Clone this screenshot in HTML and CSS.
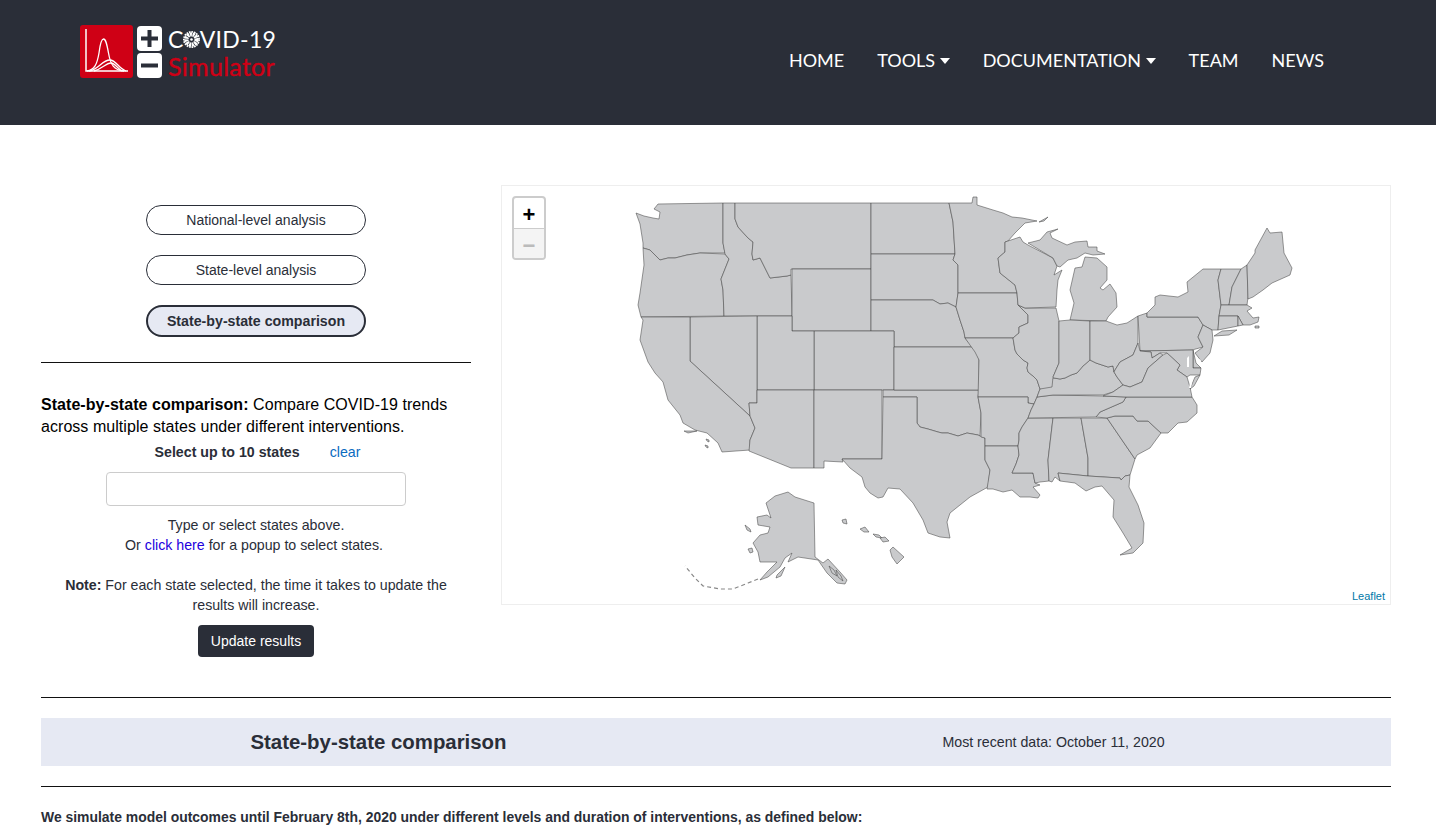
FILE: index.html
```html
<!DOCTYPE html>
<html lang="en">
<head>
  <meta charset="UTF-8" />
  <title>COVID-19 Simulator</title>
  <link rel="stylesheet" href="styles.css">
</head>
<body>

  <header class="topbar">
    <a class="logo" href="#">
      <svg class="logo-mark" viewBox="0 0 53 53" width="53" height="53">
        <rect width="53" height="53" rx="3" fill="#cf0015"/>
        <g fill="none" stroke="#fff" stroke-width="1.300">
          <path d="M6 4V46H48" stroke-width="1.500"/>
          <path d="M7 46C14 45 17 40 19 28C20 20 21 14 23.500 14C26 14 27 20 28.500 28C30.500 40 34 45 44 46"/>
          <path d="M9 46C18 45 22 35 30 35C36 35 39 44 46 46"/>
          <path d="M14 46C22 44 26 38 31 38C35 38 37 43 42 46"/>
        </g>
      </svg>
      <span class="logo-tiles">
        <svg viewBox="0 0 25 25" width="25" height="25"><rect width="25" height="25" rx="4" fill="#fff"/><path d="M12.500 4V21M4 12.500H21" stroke="#2a2e38" stroke-width="4"/></svg>
        <svg viewBox="0 0 25 25" width="25" height="25"><rect width="25" height="25" rx="4" fill="#fff"/><path d="M4 12.500H21" stroke="#2a2e38" stroke-width="4"/></svg>
      </span>
      <span class="logo-text">
        <span class="logo-covid">C<svg class="virus" viewBox="0 0 20 20" width="17" height="17"><circle cx="10" cy="10" r="6" fill="none" stroke="#fff" stroke-width="5" stroke-dasharray="2.500 .7"/><circle cx="10" cy="10" r="9" fill="none" stroke="#fff" stroke-width="2" stroke-dasharray="2 1"/><circle cx="10" cy="10" r="1.500" fill="#fff"/></svg>VID-19</span>
        <span class="logo-sim">Simulator</span>
      </span>
    </a>
    <nav class="menu">
      <a href="#">HOME</a>
      <a href="#">TOOLS <i class="caret"></i></a>
      <a href="#">DOCUMENTATION <i class="caret"></i></a>
      <a href="#">TEAM</a>
      <a href="#">NEWS</a>
    </nav>
  </header>

  <main class="page">
    <section class="top">
      <div class="sidebar">
        <div class="modes">
          <button class="mode">National-level analysis</button>
          <button class="mode">State-level analysis</button>
          <button class="mode active">State-by-state comparison</button>
        </div>
        <hr class="rule">
        <p class="intro"><strong>State-by-state comparison:</strong> Compare COVID-19 trends across multiple states under different interventions.</p>
        <div class="select-head">
          <strong>Select up to 10 states</strong>
          <a class="clear" href="#">clear</a>
        </div>
        <input class="state-input" type="text">
        <p class="hint">Type or select states above.<br>Or <a href="#">click here</a> for a popup to select states.&nbsp;</p>
        <p class="hint note"><strong>Note:</strong> For each state selected, the time it takes to update the results will increase.</p>
        <button class="update">Update results</button>
      </div>

      <div class="map">
        <svg class="states" viewBox="502 186 888 418" width="888" height="418">
          <!-- lower 48 -->
          <polygon points="658,204 723,203 723,243 725,253 700,253 687,255 675,258 668,258 660,260 656,256 650,250 643,248 643,243 640,224 636,213 644,216 653,218 659,219 660,212 654,209"/>
          <polygon points="643,248 650,250 656,256 660,260 668,258 675,258 687,255 700,253 725,254 729,259 721,279 723,290 724,316 641,317 638,305 640,293 644,265"/>
          <polygon points="723,203 735,203 735,219 738,227 748,238 753,242 752,254 753,260 760,258 767,272 770,278 787,276 791,275 792,316 724,316 723,290 721,279 729,259 725,254 723,243"/>
          <polygon points="735,203 871,203 871,269 791,269 791,275 787,276 770,278 767,272 760,258 753,260 752,254 753,242 748,238 738,227 735,219"/>
          <polygon points="792,269 871,269 871,331 792,331"/>
          <polygon points="871,203 949,203 953,222 955,254 871,254"/>
          <polygon points="871,254 955,254 953,260 958,265 958,293 956,307 948,303 940,304 933,300 871,300"/>
          <polygon points="871,300 933,300 940,304 948,303 956,307 960,320 964,332 965,338 973,347 894,347 894,331 871,331"/>
          <polygon points="814,331 894,331 894,390 814,390"/>
          <polygon points="757,316 792,316 792,331 814,331 814,390 757,390"/>
          <polygon points="690,317 757,316 757,403 749,403 750,416 690,361"/>
          <polygon points="641,317 690,317 690,361 750,416 755,428 750,440 750,450 722,452 718,443 707,433 695,430 683,423 680,415 668,400 663,382 655,373 648,362 640,340 643,320"/>
          <polygon points="757,390 814,390 814,468 791,468 749,451 750,440 755,428 750,416 749,403 757,403"/>
          <polygon points="814,390 882,390 882,459 842,459 843,462 824,461 824,468 814,468"/>
          <polygon points="883,390 979,390 978,397 981,413 980,436 978,435 967,433 958,436 948,433 942,433 938,432 928,429 920,427 917,423 917,397 883,397"/>
          <polygon points="883,397 917,397 917,423 920,427 928,429 938,432 942,433 948,433 958,436 967,433 978,435 980,436 985,438 985,460 990,470 988,487 970,497 960,505 950,513 947,522 950,538 940,537 928,533 923,520 913,503 900,489 888,488 883,497 878,498 870,493 865,487 862,477 850,468 842,459 882,459"/>
          <polygon points="894,347 973,347 977,353 979,360 979,390 894,390"/>
          <polygon points="949,203 972,203 973,197 977,197 977,205 993,210 1003,213 1012,217 1022,218 1037,221 1025,223 1015,233 1008,241 1005,242 1005,252 998,258 1000,273 1015,285 1017,293 958,293 958,265 953,260 955,254 953,222"/>
          <polygon points="958,293 1017,293 1018,305 1028,315 1028,323 1019,327 1019,333 1013,338 965,338 964,332 960,320 956,307"/>
          <polygon points="965,338 1013,338 1015,350 1017,354 1023,360 1028,363 1027,368 1028,372 1033,376 1037,380 1040,389 1037,397 1034,404 1028,403 1028,397 978,397 979,360 975,352"/>
          <polygon points="978,397 1028,397 1028,403 1034,404 1031,410 1028,418 1022,427 1019,433 1019,440 1018,446 985,446 985,438 981,437 981,413"/>
          <polygon points="985,446 1018,446 1019,455 1016,464 1012,473 1033,473 1035,483 1040,485 1033,487 1040,495 1038,498 1030,497 1020,497 1012,490 1003,492 993,489 987,489 990,470 985,460"/>
          <polygon points="1028,418 1053,418 1048,460 1049,481 1040,482 1035,483 1033,473 1012,473 1016,464 1019,455 1018,446 1019,440 1019,433 1022,427"/>
          <polygon points="1053,418 1081,418 1088,458 1088,476 1058,473 1060,481 1055,477 1052,482 1049,481 1048,460"/>
          <polygon points="1081,418 1107,418 1122,440 1135,459 1130,475 1125,476 1121,480 1120,478 1088,476 1088,458"/>
          <polygon points="1058,473 1088,476 1120,478 1121,480 1125,476 1130,475 1129,487 1138,505 1144,523 1143,543 1133,553 1120,555 1132,548 1123,533 1113,517 1114,500 1102,486 1095,487 1086,491 1075,483 1060,481"/>
          <polygon points="1107,418 1115,416 1133,416 1137,421 1148,421 1161,433 1150,448 1137,455 1135,459 1122,440"/>
          <polygon points="1126,397 1192,397 1197,405 1197,413 1187,422 1178,423 1168,433 1161,433 1148,421 1137,421 1133,416 1115,416 1107,418 1096,417 1100,412 1123,402"/>
          <polygon points="1037,397 1053,395 1103,396 1126,397 1123,402 1100,412 1096,417 1028,418 1031,410 1034,404"/>
          <polygon points="1040,389 1054,378 1060,379 1065,378 1071,375 1077,373 1083,366 1090,360 1096,363 1102,365 1108,367 1113,366 1114,372 1117,377 1123,385 1113,392 1103,395 1053,395 1037,397"/>
          <polygon points="1025,308 1056,308 1059,321 1059,363 1053,377 1052,387 1040,389 1037,380 1033,376 1028,372 1027,368 1028,363 1023,360 1017,354 1015,350 1013,338 1019,333 1019,327 1028,323 1028,315 1018,305"/>
          <polygon points="1005,242 1008,241 1020,237 1023,242 1028,245 1053,258 1057,266 1054,275 1062,270 1058,280 1057,290 1056,307 1025,308 1018,305 1017,293 1015,285 1000,273 998,258 1005,252"/>
          <polygon points="1028,243 1040,240 1047,232 1058,229 1050,233 1052,238 1067,245 1075,242 1087,241 1088,247 1097,247 1097,251 1105,254 1093,255 1085,253 1077,258 1068,260 1060,267 1057,266 1053,258"/>
          <polygon points="1085,257 1097,258 1107,267 1107,280 1100,288 1103,290 1110,284 1116,293 1117,307 1108,317 1106,321 1070,320 1074,303 1070,290 1075,268 1082,267"/>
          <polygon points="1059,321 1070,320 1090,321 1090,360 1083,366 1077,373 1071,375 1065,378 1060,379 1054,378 1053,377 1059,363"/>
          <polygon points="1090,321 1106,321 1117,325 1127,323 1138,316 1138,343 1133,355 1120,362 1115,370 1114,372 1113,366 1108,367 1102,365 1096,363 1090,360"/>
          <polygon points="1138,316 1147,313 1147,317 1198,317 1203,325 1198,337 1203,347 1192,350 1140,351"/>
          <polygon points="1147,313 1155,305 1155,297 1160,295 1178,297 1188,292 1187,282 1203,269 1221,269 1218,280 1221,305 1219,316 1218,330 1212,330 1203,325 1198,317 1147,317"/>
          <polygon points="1214,336 1222,331 1237,330 1229,335"/>
          <polygon points="1221,269 1241,269 1232,287 1229,305 1221,305 1218,280"/>
          <polygon points="1241,269 1247,265 1248,297 1247,305 1229,305 1232,287"/>
          <polygon points="1247,265 1255,253 1255,250 1267,228 1270,233 1282,232 1284,253 1292,268 1290,275 1272,283 1263,290 1253,297 1248,299"/>
          <polygon points="1221,305 1247,305 1252,308 1247,311 1253,318 1259,317 1258,322 1250,325 1243,325 1238,316 1219,316"/>
          <polygon points="1219,316 1238,316 1238,326 1218,330"/>
          <polygon points="1238,316 1243,325 1238,326"/>
          <polygon points="1203,325 1212,330 1213,340 1210,353 1202,362 1195,353 1203,347 1198,337"/>
          <polygon points="1193,350 1196,363 1201,368 1193,368"/>
          <polygon points="1140,351 1193,350 1193,368 1201,368 1200,375 1190,375 1187,377 1177,370 1180,365 1167,353 1160,353 1152,358 1151,352"/>
          <polygon points="1138,343 1140,351 1151,352 1152,358 1160,353 1163,355 1148,368 1142,382 1130,387 1123,385 1117,377 1114,372 1115,370 1120,362 1133,355"/>
          <polygon points="1123,385 1130,387 1142,382 1148,368 1163,355 1167,353 1180,365 1177,370 1187,377 1190,387 1192,397 1126,397 1103,396 1113,392"/>
          <polygon points="1195,377 1200,375 1194,386 1190,389"/>
          <!-- chesapeake and delaware bays -->
          <polygon class="water" points="1187,358 1189,356 1189,367 1187,367"/>
          <polygon class="water" points="1191,378 1193,377 1191,388 1189,388"/>
          <polygon class="water" points="1197,358 1201,360 1199,364"/>
          <!-- alaska -->
          <polygon points="788,492 795,497 814,503 815,557 823,563 828,559 840,572 847,580 845,584 837,583 827,573 818,560 798,557 788,562 792,553 785,558 780,567 768,577 760,580 767,572 777,562 767,562 760,562 758,552 753,543 760,535 768,533 770,527 758,525 757,517 767,515 771,518 766,503 775,496"/>
          <polygon points="777,575 785,567 781,576 776,578"/>
          <polygon points="745,525 750,529 751,532 747,530"/>
          <polygon points="748,549 752,548 753,552 750,553"/>
          <polygon points="829,566 834,570 837,576 832,573"/>
          <polygon points="836,570 841,576 843,581 838,577"/>
          <path class="chain" d="M758 579L748 583L733 589L720 589L703 586L695 578L685 566"/>
          <!-- hawaii -->
          <polygon points="842,520 846,519 847,524 843,523"/>
          <polygon points="860,529 865,527 869,532 864,532"/>
          <polygon points="873,534 879,535 882,538 876,537"/>
          <polygon points="880,538 885,537 889,541 883,542"/>
          <polygon points="890,550 893,547 904,557 897,564 892,557"/>
          <!-- california islands -->
          <polygon points="684,431 690,431 697,431 688,433"/>
          <polygon points="706,439 709,440 709,442 707,441"/>
          <polygon points="705,445 708,446 708,448 706,447"/>
          <!-- isle royale, nantucket -->
          <polygon points="1039,222 1048,217 1044,221"/>
          <polygon points="1255,326 1259,326 1259,328 1255,328"/>
        </svg>
        <div class="zoom">
          <span class="zoom-btn">+</span>
          <span class="zoom-btn off">&minus;</span>
        </div>
        <a class="credit" href="#">Leaflet</a>
      </div>
    </section>

    <hr class="rule wide">
    <div class="band">
      <h2>State-by-state comparison</h2>
      <p>Most recent data: October 11, 2020</p>
    </div>
    <hr class="rule">
    <p class="lead">We simulate model outcomes until February 8th, 2020 under different levels and duration of interventions, as defined below:</p>
  </main>

</body>
</html>
```

FILE: styles.css
```css
* {
  box-sizing: border-box;
}

body {
  margin: 0;
  font-family: "Liberation Sans", Arial, sans-serif;
  font-size: 14.2px;
  color: #2a2e38;
  background: white;
  overflow: hidden;
}

p {
  margin: 0;
}

/* header */
.topbar {
  height: 125px;
  background-color: #2a2e38;
  display: flex;
  justify-content: space-between;
  align-items: flex-start;
  padding: 25px 112px 0 80px;
}

.logo {
  display: flex;
  text-decoration: none;
}

.logo-mark {
  display: block;
}

.logo-tiles {
  display: flex;
  flex-direction: column;
  gap: 2px;
  margin: 1px 6px 0 4px;
}

.logo-tiles svg {
  display: block;
}

.logo-text {
  display: flex;
  flex-direction: column;
  font-family: Lato, sans-serif;
  font-size: 23px;
  line-height: 28px;
  letter-spacing: 0.3px;
}

.logo-covid {
  color: white;
  display: flex;
  align-items: center;
}

.logo-sim {
  color: #cf0015;
  font-size: 25px;
  line-height: 26px;
  -webkit-text-stroke: 0.4px #cf0015;
}

.virus {
  margin: 0 0 0 -1px;
}

.menu {
  display: flex;
  gap: 33px;
  margin-top: 24px;
}

.menu a {
  color: white;
  text-decoration: none;
  font-family: Lato, sans-serif;
  font-size: 18px;
  line-height: 22px;
}

.caret {
  display: inline-block;
  border-top: 6px solid white;
  border-left: 5.5px solid transparent;
  border-right: 5.5px solid transparent;
  vertical-align: 3px;
}

/* page */
.page {
  width: 1350px;
  margin-left: 41px;
}

.top {
  display: flex;
  gap: 30px;
  padding-top: 60px;
}

.sidebar {
  width: 430px;
  text-align: center;
}

.modes {
  display: flex;
  flex-direction: column;
  align-items: center;
  padding-top: 20px;
}

.mode {
  width: 220px;
  height: 30px;
  margin-bottom: 20px;
  border: 1px solid #2a2e38;
  border-radius: 15px;
  background: white;
  color: #2a2e38;
  font-family: inherit;
  font-size: 14px;
  padding: 0;
}

.mode.active {
  height: 32px;
  margin-bottom: 0;
  border-width: 2px;
  border-radius: 16px;
  background-color: #e6e9f3;
  font-size: 14.2px;
  font-weight: bold;
}

.rule {
  border: none;
  border-top: 1px solid #111;
  margin: 25px 0 0;
}

.intro {
  margin-top: 31px;
  text-align: left;
  font-size: 16px;
  letter-spacing: 0.05px;
  line-height: 22px;
  color: #000;
}

.select-head {
  display: flex;
  justify-content: center;
  gap: 30px;
  margin: 4px 0 0 3px;
  line-height: 20px;
}

.clear {
  color: #0b6cbf;
  text-decoration: none;
}

.state-input {
  display: block;
  width: 300px;
  height: 34px;
  margin: 10px auto 0;
  border: 1px solid #ccc;
  border-radius: 4px;
}

.hint {
  margin-top: 9px;
  line-height: 20px;
}

.hint a {
  color: #2200dd;
  text-decoration: none;
}

.note {
  margin: 20px 20px 0;
}

.update {
  margin-top: 10px;
  width: 116px;
  height: 32px;
  border: none;
  border-radius: 4px;
  background-color: #2a2e38;
  color: white;
  font-family: inherit;
  font-size: 14px;
}

/* map */
.map {
  position: relative;
  width: 890px;
  height: 420px;
  border: 1px solid #eeeeee;
}

.states {
  display: block;
}

.states polygon {
  fill: #c9cacc;
  stroke: #444;
  stroke-opacity: 0.6;
  stroke-width: 0.9;
  stroke-linejoin: round;
}

.states .water {
  fill: white;
  stroke: none;
}

.states .chain {
  fill: none;
  stroke: #888;
  stroke-width: 1.2;
  stroke-dasharray: 4 3;
}

.zoom {
  position: absolute;
  top: 10px;
  left: 10px;
  width: 34px;
  border: 2px solid #ccc;
  border-radius: 4px;
  background: white;
}

.zoom-btn {
  display: block;
  height: 30px;
  line-height: 33px;
  text-align: center;
  font-family: "Liberation Sans", Arial, sans-serif;
  font-size: 22px;
  font-weight: bold;
  color: #000;
}

.zoom-btn.off {
  border-top: 1px solid #ccc;
  background-color: #f4f4f4;
  color: #bbb;
  border-radius: 0 0 2px 2px;
}

.credit {
  position: absolute;
  right: 5px;
  bottom: 1px;
  font-size: 11px;
  line-height: 14px;
  color: #0078a8;
  text-decoration: none;
}

/* lower part */
.wide {
  margin-top: 40px;
}

.band {
  display: grid;
  grid-template-columns: 1fr 1fr;
  align-items: center;
  height: 48px;
  margin-top: 20px;
  margin-bottom: 20px;
  background-color: #e6e9f3;
  text-align: center;
}

.band h2 {
  margin: 0;
  font-size: 20.400px;
}

.band + .rule {
  margin-top: 0;
}

.lead {
  margin-top: 22px;
  font-size: 13.930px;
  font-weight: bold;
  line-height: 16px;
}
```
